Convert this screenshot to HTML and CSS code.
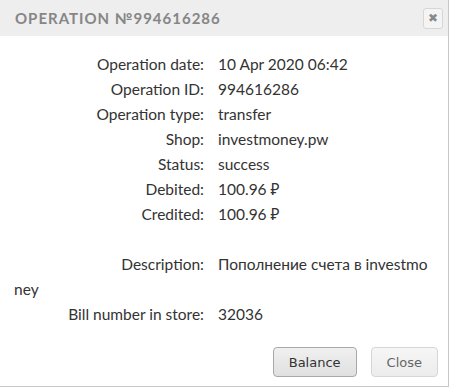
FILE: index.html
```html
<!DOCTYPE html>
<html lang="en">
<head>
    <meta charset="UTF-8">
    <title>Operation</title>
    <link rel="stylesheet" href="styles.css">
</head>
<body>
    <div class="dialog">
        <div class="dialog-head">
            <span class="dialog-title">Operation №994616286</span>
            <button class="close-x" type="button">&#10006;</button>
        </div>
        <div class="dialog-body">
            <div class="row"><span class="label">Operation date:</span><span class="value">10 Apr 2020 06:42</span></div>
            <div class="row"><span class="label">Operation ID:</span><span class="value">994616286</span></div>
            <div class="row"><span class="label">Operation type:</span><span class="value">transfer</span></div>
            <div class="row"><span class="label">Shop:</span><span class="value">investmoney.pw</span></div>
            <div class="row"><span class="label">Status:</span><span class="value">success</span></div>
            <div class="row"><span class="label">Debited:</span><span class="value">100.96 ₽</span></div>
            <div class="row"><span class="label">Credited:</span><span class="value">100.96 ₽</span></div>
            <div class="row empty"></div>
            <div class="row"><span class="label">Description:</span><span class="value wrap">Пополнение счета в investmoney</span></div>
            <div class="row"><span class="label">Bill number in store:</span><span class="value">32036</span></div>
        </div>
        <div class="dialog-foot">
            <button class="btn btn-main" type="button">Balance</button>
            <button class="btn btn-light" type="button">Close</button>
        </div>
    </div>
</body>
</html>
```

FILE: styles.css
```css
body {
    margin: 0;
    background-color: #fff;
    font-family: Lato, "Noto Sans", sans-serif;
}
.dialog {
    width: 448px;
    height: 386px;
    border-right: 1px solid #c8c8c8;
    border-bottom: 1px solid #c8c8c8;
    background: white;
    display: flex;
    flex-direction: column;
}
.dialog-head {
    height: 36px;
    background-color: #eeeeee;
    display: flex;
    align-items: center;
    justify-content: space-between;
    padding: 0 5px 0 15px;
}
.dialog-title {
    text-transform: uppercase;
    font-size: 15px;
    letter-spacing: 1px;
    color: #868686;
    font-weight: bold;
}
.close-x {
    width: 20px;
    height: 21px;
    padding: 0;
    border: 1px solid #d6d6d6;
    border-radius: 3px;
    background: #f4f4f4;
    color: #8a8a8a;
    font-size: 12px;
    line-height: 19px;
    margin-top: 1px;
}
.dialog-body {
    padding: 16px 14px 0 14px;
    font-size: 15.5px;
    color: #333;
}
.row {
    line-height: 25px;
    min-height: 25px;
}
.label {
    display: inline-block;
    width: 190px;
    text-align: right;
    margin-right: 14px;
}
.wrap {
    word-break: break-all;
}
.dialog-foot {
    display: flex;
    justify-content: flex-end;
    gap: 14px;
    padding: 20px 10px 0 0;
}
.btn {
    height: 30px;
    padding: 0 15px;
    border-radius: 4px;
    font-family: "DejaVu Sans", Verdana, sans-serif;
    font-size: 13px;
}
.btn-main {
    border: 1px solid #a8a8a8;
    background: linear-gradient(#f0f0f0, #e0e0e0);
    color: #333;
}
.btn-light {
    border: 1px solid #d6d6d6;
    background: linear-gradient(#f6f6f6, #ececec);
    color: #666;
}
```
